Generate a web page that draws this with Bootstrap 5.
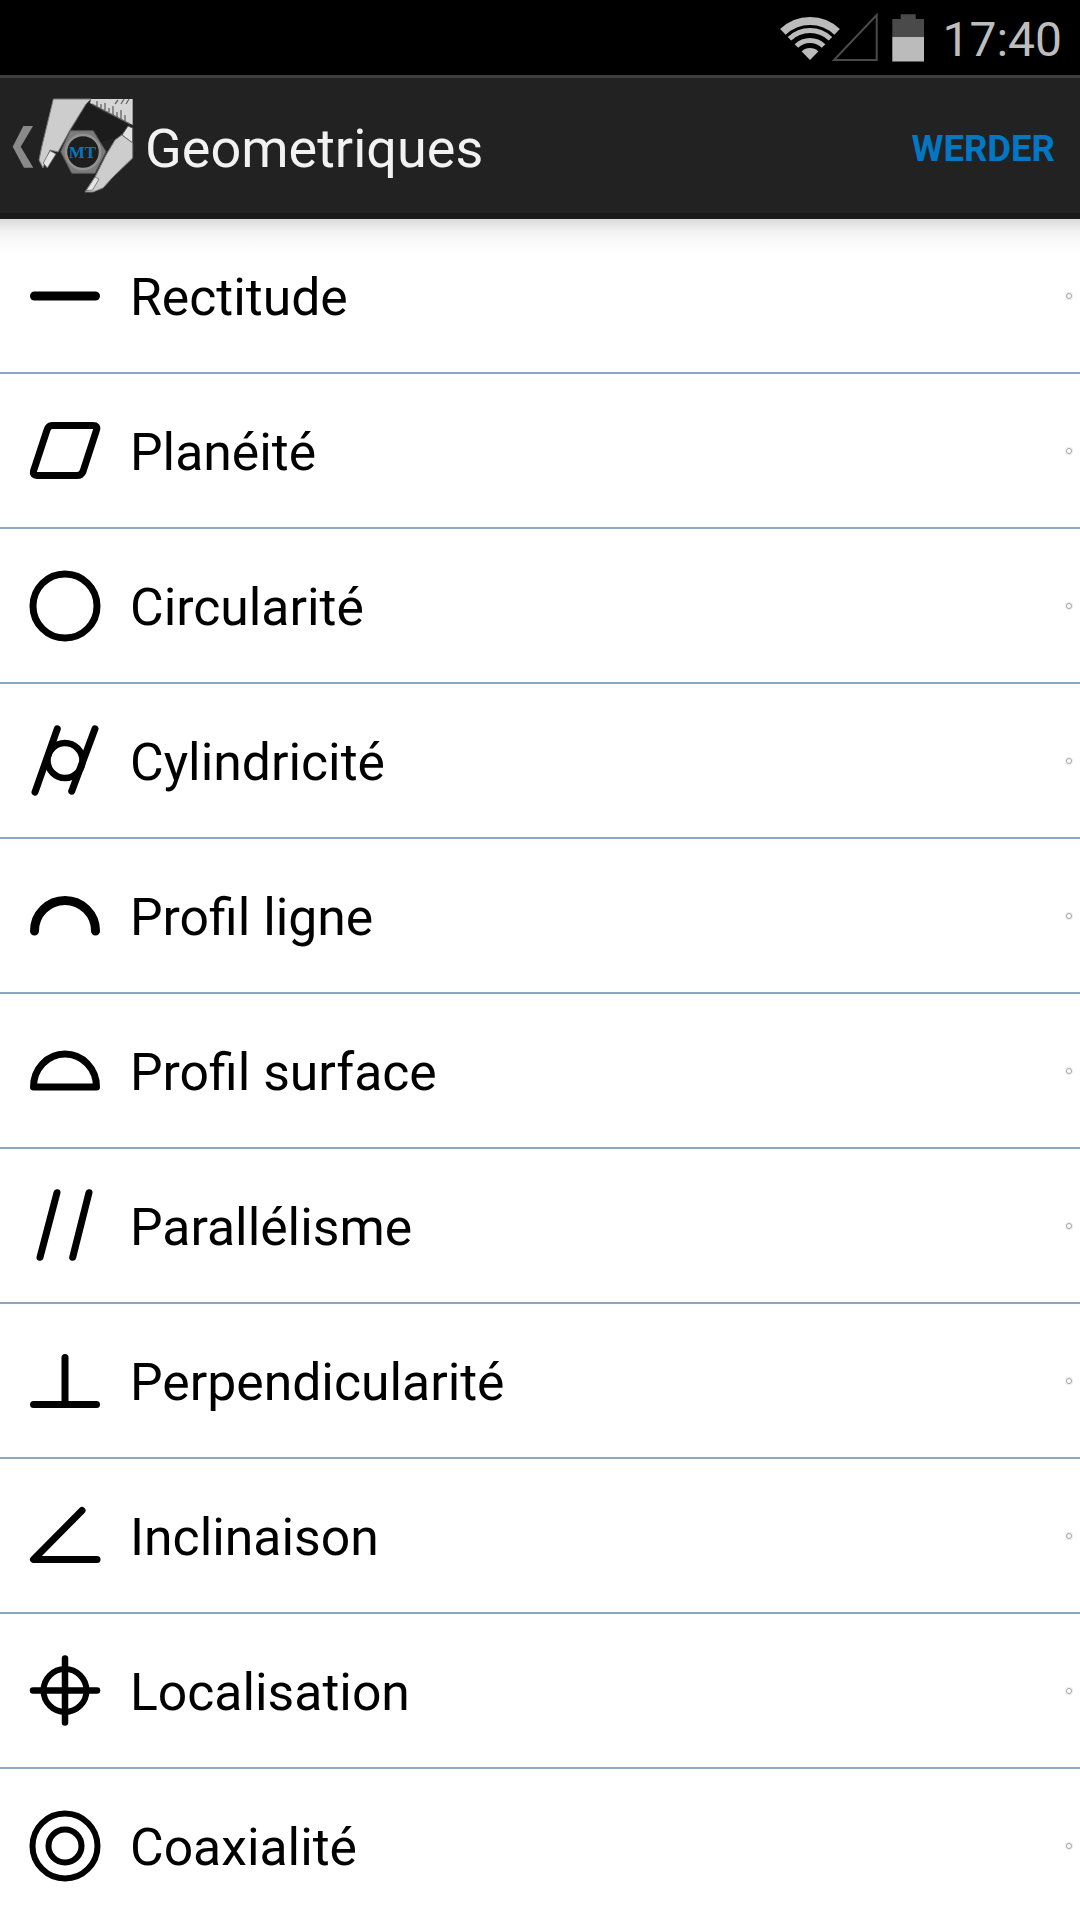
<!DOCTYPE html>
<html lang="fr">
<head>
<meta charset="utf-8">
<title>Geometriques</title>
<link href="https://cdn.jsdelivr.net/npm/bootstrap@5.3.0/dist/css/bootstrap.min.css" rel="stylesheet">
<style>
html,body{width:1080px;height:1920px;margin:0;overflow:hidden;background:#fff;font-family:Roboto,"Liberation Sans",sans-serif}
.sbar{height:75px;background:#000;color:#bbb;padding-right:18px}
.sbar-time{font-size:48px;font-weight:400;line-height:1;margin-left:16px;padding-top:5px;color:#bdbdbd}
.abar{height:144px;background:#222;border-top:3px solid #3e3e3e;border-bottom:6px solid #1a1a1a;padding-right:25px}
.abar-logo{flex:none;display:block}
.abar-title{font-size:54px;font-weight:400;color:#f2f2f2;margin-left:10px;line-height:1;padding-top:7px}
.abar-act{font-size:36.5px;font-weight:700;color:#0277c4;line-height:1;padding-top:8px}
.geo-list{--bs-list-group-border-radius:0;--bs-list-group-border-width:0}
.geo-row{height:155px;padding:0 8px 0 25px;background:transparent;border:0;border-bottom:2px solid #8aa8c4!important;font-size:51.7px;color:#000;line-height:1}
.geo-row:first-child{background:linear-gradient(#dcdcdc,#f4f4f4 14px,#fff 34px)}
.geo-ico{flex:none;width:80px;height:80px;display:block;fill:none;stroke:#000;stroke-linecap:round;stroke-linejoin:round}
.geo-name{margin-left:25px;padding-top:4px;flex:1}
.geo-dot{flex:none;width:6px;height:6px;border:1.5px solid #a6a6a6;box-shadow:0 0 0 1px #ececec;border-radius:50%;background:#fff}
</style>
</head>
<body>
<div class="sbar d-flex align-items-center justify-content-end">
<svg width="146" height="52" viewBox="780 10 146 52" class="d-block">
<g fill="none" stroke="#bbb">
<path d="M782.9 29.9A39 39 0 0 1 837.1 29.9" stroke-width="8"/>
<path d="M789.5 36.8A29.5 29.5 0 0 1 830.5 36.8" stroke-width="5"/>
<path d="M796.4 44A19.5 19.5 0 0 1 823.6 44" stroke-width="5"/>
</g>
<path d="M810 58L801.7 49.4A12 12 0 0 1 818.3 49.4Z" fill="#bbb"/>
<path d="M834 58L876.7 13V58Z" fill="none" stroke="#4a4a4a" stroke-width="2"/>
<path d="M900.7 12.3H915.7V17H924V35H892.3V17H900.7Z" fill="#4a4a4a"/>
<rect x="892.3" y="35" width="31.7" height="24.5" fill="#bbb"/>
</svg>
<span class="sbar-time">17:40</span>
</div>
<div class="abar d-flex align-items-center">
<svg class="abar-logo" width="135" height="96" viewBox="0 98 135 96">
<path d="M33 126H23.3L12.7 146.7L24 167.7H33.3L20.7 146.7Z" fill="#8a8a8a"/>
<path d="M86 104L128 124L122 140L113 138L95 145L70 135Z" fill="#1c1c1c"/>
<path d="M91 99H132.7V125L90 103Z" fill="#d6d6d6"/>
<path d="M92 104L130 124M97 106V101M101 108V104M105 110V103M109 112V108M113 115V106M117 117V112M121 119V110M125 121V115M118 100L115 104M124 99L121 104M129 99L126 104" stroke="#666" stroke-width="1.3" fill="none"/>
<path d="M53.3 99H91L86 104L70 130L58 152L50 150L43 168L39 160L41.7 147Z" fill="#cdcdcd" stroke="#777" stroke-width="1"/>
<path d="M50 150.7L56 154L47.3 168L43.3 163Z" fill="#e4e4e4" stroke="#666" stroke-width=".8"/>
<path d="M128 126L132.7 128V143L122 135Z" fill="#e2e2e2" stroke="#555" stroke-width="1"/>
<path d="M115 140L121.7 135L132.7 143V158L113 177L103 188L93 192H85L95 177L106 155Z" fill="#cdcdcd" stroke="#777" stroke-width="1"/>
<path d="M95 177L99 179L92.7 190L86 190.7Z" fill="#e4e4e4" stroke="#666" stroke-width=".8"/>
<path d="M70 130.7H93.3L106 151.7L95 173.3H71.7L60.7 151.7Z" fill="#7b7b7b" stroke="#555" stroke-width="1"/>
<circle cx="83" cy="152" r="17" fill="#1e1e1e" stroke="#929292" stroke-width="2.5"/>
<text x="82.5" y="158" text-anchor="middle" font-family="Liberation Serif" font-weight="700" font-size="17" fill="#0277c4">MT</text>
</svg>
<span class="abar-title">Geometriques</span>
<span class="abar-act ms-auto">WERDER</span>
</div>
<div class="list-group geo-list">
<div class="list-group-item geo-row d-flex align-items-center">
<svg class="geo-ico" viewBox="0 0 80 80"><path d="M9.5 40H70.5" stroke-width="9"/></svg>
<span class="geo-name">Rectitude</span><span class="geo-dot"></span></div>
<div class="list-group-item geo-row d-flex align-items-center">
<svg class="geo-ico" viewBox="0 0 80 80"><path d="M27 14.5H68Q73 14.5 71.5 19L58 60.5Q56.5 64.5 52 64.5H12Q7.5 64.5 8.5 60L22 19Q23.5 14.5 27 14.5Z" stroke-width="7"/></svg>
<span class="geo-name">Planéité</span><span class="geo-dot"></span></div>
<div class="list-group-item geo-row d-flex align-items-center">
<svg class="geo-ico" viewBox="0 0 80 80"><circle cx="40" cy="40" r="32" stroke-width="7"/></svg>
<span class="geo-name">Circularité</span><span class="geo-dot"></span></div>
<div class="list-group-item geo-row d-flex align-items-center">
<svg class="geo-ico" viewBox="0 0 80 80"><path d="M32.3 7.8L10 71.2M70 7.8L46.7 70.2" stroke-width="7"/><circle cx="40" cy="39.5" r="17.5" stroke-width="6.5"/></svg>
<span class="geo-name">Cylindricité</span><span class="geo-dot"></span></div>
<div class="list-group-item geo-row d-flex align-items-center">
<svg class="geo-ico" viewBox="0 0 80 80"><path d="M9.5 55A30.5 30.5 0 0 1 70.5 55" stroke-width="9"/></svg>
<span class="geo-name">Profil ligne</span><span class="geo-dot"></span></div>
<div class="list-group-item geo-row d-flex align-items-center">
<svg class="geo-ico" viewBox="0 0 80 80"><path d="M8.5 56A31.5 33 0 0 1 71.5 56Z" stroke-width="7"/></svg>
<span class="geo-name">Profil surface</span><span class="geo-dot"></span></div>
<div class="list-group-item geo-row d-flex align-items-center">
<svg class="geo-ico" viewBox="0 0 80 80"><path d="M32 6.7L15 71.3M64 6.7L47.7 71.3" stroke-width="7"/></svg>
<span class="geo-name">Parallélisme</span><span class="geo-dot"></span></div>
<div class="list-group-item geo-row d-flex align-items-center">
<svg class="geo-ico" viewBox="0 0 80 80"><path d="M40 16.5V63.5" stroke-width="7"/><path d="M8.5 63.5H71.5" stroke-width="7"/></svg>
<span class="geo-name">Perpendicularité</span><span class="geo-dot"></span></div>
<div class="list-group-item geo-row d-flex align-items-center">
<svg class="geo-ico" viewBox="0 0 80 80"><path d="M57 14.5L8.5 63.5H72" stroke-width="7"/></svg>
<span class="geo-name">Inclinaison</span><span class="geo-dot"></span></div>
<div class="list-group-item geo-row d-flex align-items-center">
<svg class="geo-ico" viewBox="0 0 80 80"><circle cx="40" cy="39.5" r="21.5" stroke-width="6"/><path d="M8 39.5H72M40 7.5V71.5" stroke-width="6.5"/></svg>
<span class="geo-name">Localisation</span><span class="geo-dot"></span></div>
<div class="list-group-item geo-row d-flex align-items-center">
<svg class="geo-ico" viewBox="0 0 80 80"><circle cx="40" cy="40" r="32.5" stroke-width="6"/><circle cx="40" cy="40" r="16.5" stroke-width="6"/></svg>
<span class="geo-name">Coaxialité</span><span class="geo-dot"></span></div>
</div>
<script src="https://cdn.jsdelivr.net/npm/bootstrap@5.3.0/dist/js/bootstrap.bundle.min.js"></script>
</body>
</html>
